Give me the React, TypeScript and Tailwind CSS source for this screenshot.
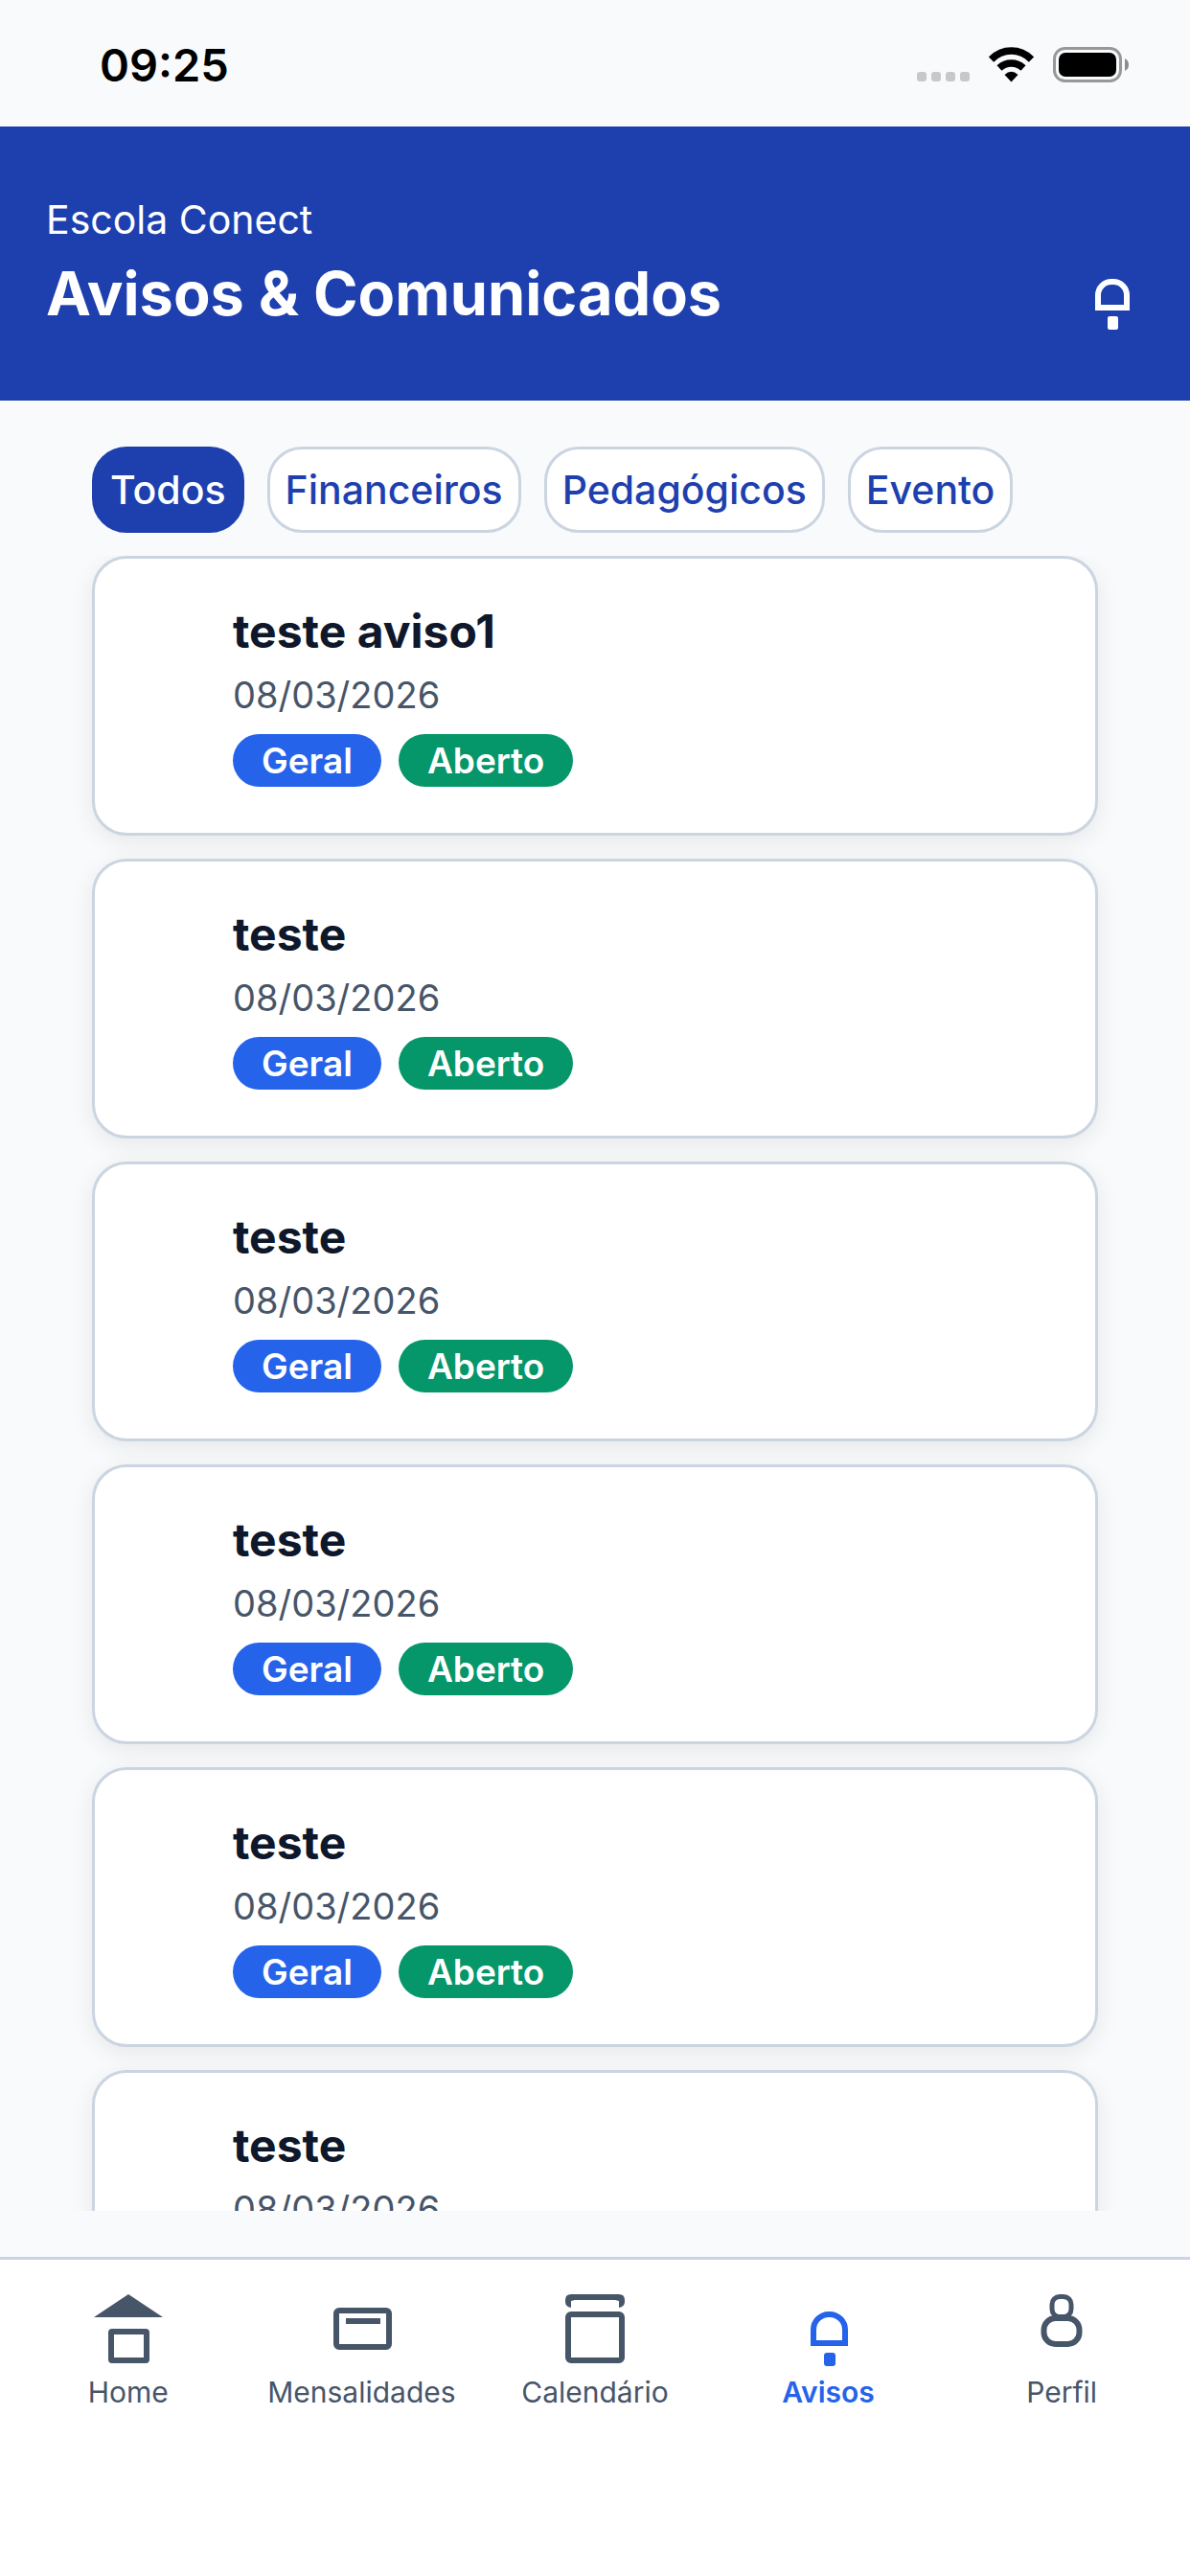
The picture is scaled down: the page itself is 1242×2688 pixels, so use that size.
import React from 'react';

const filtros = ['Todos', 'Financeiros', 'Pedagógicos', 'Evento'];

const avisos = [
    { id: 1, titulo: 'teste aviso1', data: '08/03/2026' },
    { id: 2, titulo: 'teste', data: '08/03/2026' },
    { id: 3, titulo: 'teste', data: '08/03/2026' },
    { id: 4, titulo: 'teste', data: '08/03/2026' },
    { id: 5, titulo: 'teste', data: '08/03/2026' },
    { id: 6, titulo: 'teste', data: '08/03/2026' },
];

const HomeIcon = () => (
    <svg width="72" height="72" viewBox="0 0 72 72" fill="none">
        <path d="M36 0L72 24H0Z" fill="currentColor" />
        <rect x="18" y="39" width="37" height="30" rx="1" stroke="currentColor" strokeWidth="6" />
    </svg>
);

const MensalidadesIcon = () => (
    <svg width="72" height="72" viewBox="0 0 72 72" fill="none">
        <rect x="10" y="17" width="55" height="38" rx="3" stroke="currentColor" strokeWidth="6" />
        <path d="M20 28H56" stroke="currentColor" strokeWidth="6" />
    </svg>
);

const CalendarioIcon = () => (
    <svg width="72" height="72" viewBox="0 0 72 72" fill="none">
        <path d="M5 6Q5 0 11 0H61Q67 0 67 6V8Q67 13 61 14V7L57 6H15L11 7V14Q5 13 5 8Z" fill="currentColor" />
        <rect x="8" y="21" width="56" height="48" rx="3" stroke="currentColor" strokeWidth="6" />
    </svg>
);

const AvisosIcon = () => (
    <svg width="72" height="72" viewBox="0 0 72 72" fill="none" className="overflow-visible">
        <path d="M20 51V37A16 16 0 0 1 36 21H37A16 16 0 0 1 53 37V51Z" stroke="currentColor" strokeWidth="6" />
        <rect x="31" y="61" width="12" height="14" rx="3" fill="currentColor" />
    </svg>
);

const PerfilIcon = () => (
    <svg width="72" height="72" viewBox="0 0 72 72" fill="none">
        <rect x="26" y="2.500" width="20" height="21" rx="8" stroke="currentColor" strokeWidth="5" />
        <rect x="17.500" y="25" width="37" height="27" rx="12" stroke="currentColor" strokeWidth="6" />
    </svg>
);

const abas = [
    { nome: 'Home', Icone: HomeIcon },
    { nome: 'Mensalidades', Icone: MensalidadesIcon },
    { nome: 'Calendário', Icone: CalendarioIcon },
    { nome: 'Avisos', Icone: AvisosIcon },
    { nome: 'Perfil', Icone: PerfilIcon },
];

const StatusBar = () => (
    <div className="flex h-[132px] shrink-0 items-center justify-between pt-1 pl-[104px] pr-16 text-black">
        <span className="text-[47px] leading-[60px] font-semibold">09:25</span>
        <div className="flex items-center gap-5">
            <svg width="55" height="38" viewBox="0 0 55 38" fill="#c7c8ca">
                <rect x="0" y="26" width="10" height="10" rx="3" />
                <rect x="15" y="26" width="10" height="10" rx="3" />
                <rect x="30" y="26" width="10" height="10" rx="3" />
                <rect x="45" y="26" width="10" height="10" rx="3" />
            </svg>
            <svg width="47" height="38" viewBox="0 0 47 38" fill="none" stroke="currentColor">
                <path d="M2.500 13Q11.500 4 23.500 4T44.500 13" strokeWidth="7.500" />
                <path d="M11 22Q16.500 17 23.500 17T36 22" strokeWidth="7.500" />
                <path d="M23.500 36.500L16.500 29Q23.500 22.500 30.500 29Z" fill="currentColor" stroke="none" />
            </svg>
            <svg width="79" height="38" viewBox="0 0 79 38" fill="none">
                <rect x="1.500" y="1.500" width="69" height="34" rx="11" stroke="#97989a" strokeWidth="3" />
                <rect x="6" y="6" width="60" height="25" rx="7" fill="currentColor" />
                <path d="M75 12Q79 14 79 18.500Q79 23 75 25Z" fill="#8b8c8e" />
            </svg>
        </div>
    </div>
);

const App = () => {
    return (
        <div className="flex h-screen flex-col bg-[#f8fafc] font-['Inter',sans-serif]">
            <StatusBar />

            <header className="flex shrink-0 items-end justify-between bg-[#1e40af] py-[72px] px-12 text-white">
                <div>
                    <p className="text-[41px] leading-[50px]">Escola Conect</p>
                    <h1 className="mt-3 text-[63px] leading-[80px] font-bold">Avisos &amp; Comunicados</h1>
                </div>
                <button type="button" aria-label="Notificações">
                    <svg width="66" height="55" viewBox="0 0 66 55" fill="none">
                        <path d="M18 30V17A14 14 0 0 1 32 3H34A14 14 0 0 1 48 17V30Z" stroke="currentColor" strokeWidth="6" />
                        <rect x="28" y="39" width="11" height="14" rx="2" fill="currentColor" />
                    </svg>
                </button>
            </header>

            <main className="flex min-h-0 flex-1 flex-col p-12">
                <div className="flex shrink-0 gap-6 px-12">
                    {filtros.map((filtro, i) => (
                        <button
                            key={filtro}
                            type="button"
                            className={
                                i === 0
                                    ? 'h-[90px] rounded-[36px] border-[3px] border-[#1e40af] bg-[#1e40af] px-4 text-[41px] leading-[50px] font-medium text-white'
                                    : 'h-[90px] rounded-[36px] border-[3px] border-[#cbd5e1] bg-white px-4 text-[41px] leading-[50px] font-medium text-[#1e40af]'
                            }
                        >
                            {filtro}
                        </button>
                    ))}
                </div>

                <div className="mt-6 flex min-h-0 flex-1 flex-col gap-6 overflow-hidden px-12">
                    {avisos.map((aviso) => (
                        <article
                            key={aviso.id}
                            className="h-[292px] shrink-0 rounded-[36px] border-[3px] border-[#cbd5e1] bg-white pt-11 pl-36 shadow-[0_6px_24px_rgba(0,0,0,0.08)]"
                        >
                            <h2 className="text-[48px] leading-[64px] font-bold text-[#0f172a]">{aviso.titulo}</h2>
                            <p className="mt-1 text-[38px] leading-[60px] text-[#475569]">{aviso.data}</p>
                            <div className="mt-[11px] flex gap-[18px]">
                                <span className="rounded-full bg-[#2563eb] px-[30px] text-[37px] leading-[55px] font-semibold text-white">Geral</span>
                                <span className="rounded-full bg-[#059669] px-[30px] text-[37px] leading-[55px] font-semibold text-white">Aberto</span>
                            </div>
                        </article>
                    ))}
                </div>
            </main>

            <nav className="flex h-[333px] shrink-0 items-start border-t-[3px] border-[#cbd5e1] bg-white px-3 pt-9">
                {abas.map(({ nome, Icone }) => (
                    <a
                        key={nome}
                        href="#"
                        className={
                            nome === 'Avisos'
                                ? 'flex flex-1 flex-col items-center gap-2.5 text-[30px] leading-[40px] font-semibold text-[#2563eb]'
                                : 'flex flex-1 flex-col items-center gap-2.5 text-[30px] leading-[40px] text-[#475569]'
                        }
                    >
                        <Icone />
                        {nome}
                    </a>
                ))}
            </nav>
        </div>
    );
};

export default App;
